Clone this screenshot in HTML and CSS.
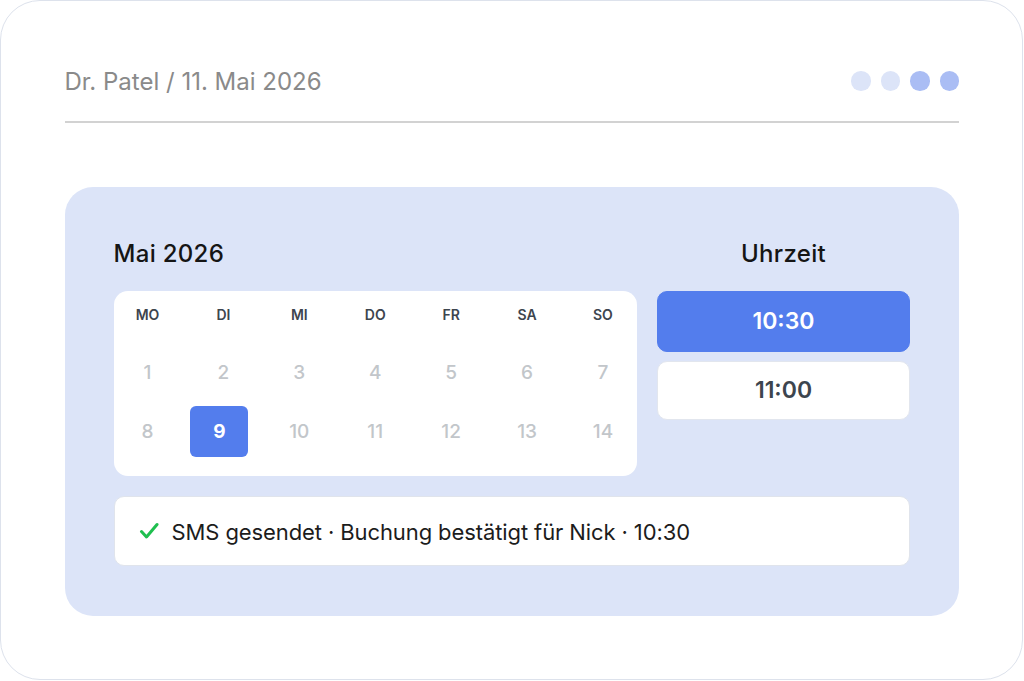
FILE: index.html
```html
<!DOCTYPE html>
<html lang="de">
<head>
<meta charset="utf-8">
<title>Buchung</title>
<link rel="stylesheet" href="styles.css">
</head>
<body>
<div class="card">
  <div class="header">
    <div class="crumb">Dr. Patel / 11. Mai 2026</div>
    <div class="dots">
      <span class="dot"></span><span class="dot"></span><span class="dot dot-on"></span><span class="dot dot-on"></span>
    </div>
  </div>
  <div class="rule"></div>
  <div class="panel">
    <div class="top">
      <div class="cal-col">
        <div class="title">Mai 2026</div>
        <div class="cal">
          <div class="row head">
            <span>MO</span><span>DI</span><span>MI</span><span>DO</span><span>FR</span><span>SA</span><span>SO</span>
          </div>
          <div class="row days">
            <span>1</span><span>2</span><span>3</span><span>4</span><span>5</span><span>6</span><span>7</span>
          </div>
          <div class="row days">
            <span>8</span><span class="sel">9</span><span>10</span><span>11</span><span>12</span><span>13</span><span>14</span>
          </div>
        </div>
      </div>
      <div class="time-col">
        <div class="title center">Uhrzeit</div>
        <div class="slot slot-on">10:30</div>
        <div class="slot">11:00</div>
      </div>
    </div>
    <div class="msg">
      <svg class="check" width="20" height="20" viewBox="0 0 20 20"><path d="M2.5 10.5 L7.5 16 L18 3.5" fill="none" stroke="#1fbf4f" stroke-width="3" stroke-linecap="round" stroke-linejoin="round"/></svg>
      <span>SMS gesendet · Buchung bestätigt für Nick · 10:30</span>
    </div>
  </div>
</div>
</body>
</html>
```

FILE: styles.css
```css
* { box-sizing: border-box; }
html, body { margin: 0; padding: 0; background: #ffffff; }
body {
  width: 1024px;
  height: 681px;
  font-family: Inter, "Noto Sans", sans-serif;
}
.card {
  width: 1023px;
  height: 680px;
  border: 1.5px solid #dde2ec;
  border-radius: 40px;
  padding: 64px 63px 0 63.5px;
  background: #fff;
}
.header {
  display: flex;
  align-items: center;
  justify-content: space-between;
  height: 32px;
}
.crumb {
  font-size: 24px;
  color: #8a8a8a;
  letter-spacing: 0;
}
.dots { display: flex; gap: 10px; }
.dot {
  width: 19.5px;
  height: 19.5px;
  border-radius: 50%;
  background: #dce4f8;
}
.dot-on { background: #aabdf4; }
.rule {
  height: 1.5px;
  background: #d2d2d2;
  margin-top: 24px;
}
.panel {
  margin-top: 64px;
  background: #dce4f8;
  border-radius: 28px;
  padding: 51px 49px 50px;
}
.top { display: flex; gap: 20px; }
.cal-col { flex: 1; }
.time-col { width: 253px; }
.title {
  font-size: 24px;
  font-weight: 500;
  color: #151515;
  line-height: 32px;
  margin-bottom: 21px;
  letter-spacing: 0.3px;
}
.center { text-align: center; }
.cal {
  background: #fff;
  border-radius: 14px;
  padding: 16px 5px 19px;
}
.row {
  display: flex;
  justify-content: space-between;
}
.row span {
  width: 58px;
  text-align: center;
}
.head {
  height: 16px;
  line-height: 16px;
  font-size: 14px;
  font-weight: 600;
  color: #3d454e;
  margin-bottom: 24px;
}
.days {
  height: 51px;
  font-size: 19px;
  font-weight: 500;
  color: #c2c6ca;
}
.days span { line-height: 51px; }
.days + .days { margin-top: 8px; }
.days .sel {
  background: #537ded;
  color: #fff;
  font-weight: 700;
  border-radius: 6px;
  transform: translateX(-4px);
}
.slot {
  height: 59px;
  border-radius: 10px;
  background: #fff;
  border: 1px solid #e2e6ee;
  display: flex;
  align-items: center;
  justify-content: center;
  font-size: 23px;
  font-weight: 600;
  color: #3d454e;
  margin-bottom: 9px;
}
.slot-on {
  height: 61px;
  background: #537ded;
  border-color: #537ded;
  color: #fff;
  margin-bottom: 9px;
}
.msg {
  margin-top: 20px;
  height: 70px;
  background: #fff;
  border: 1px solid #e0e4ec;
  border-radius: 10px;
  display: flex;
  align-items: center;
  padding: 3px 0 0 24px;
  gap: 13px;
  font-size: 22px;
  color: #1c1c1c;
  letter-spacing: -0.1px;
}
.check { flex: none; margin-top: -2px; }
```
